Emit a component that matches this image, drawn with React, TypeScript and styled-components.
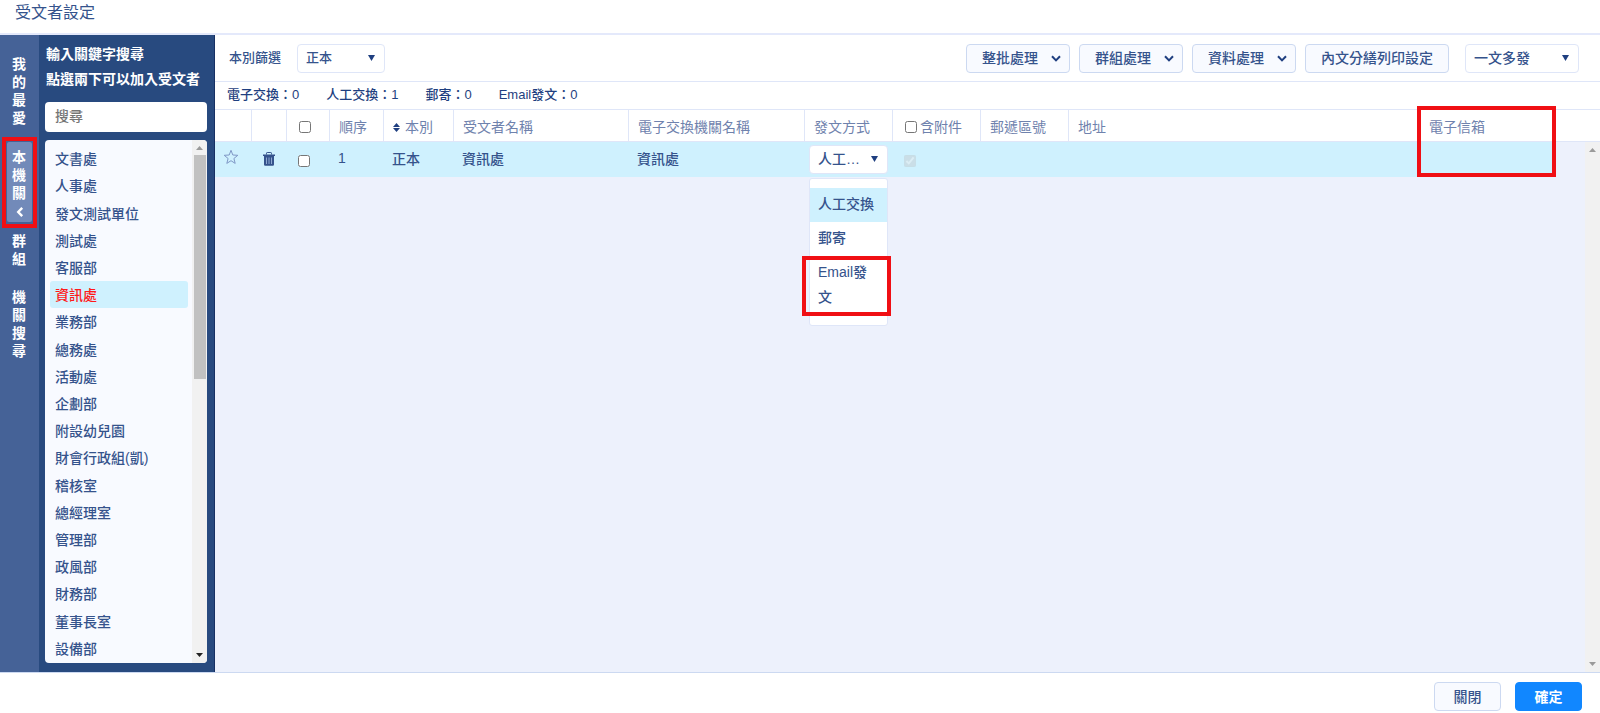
import React from "react";
import styled, { createGlobalStyle, css } from "styled-components";

const color = {
  ink: "#35538c",
  inkDeep: "#1f3f80",
  inkSoft: "#6f82ad",
  line: "#dfe6f8",
  lineStrong: "#ccd9f1",
  surface: "#edf1fc",
  panel: "#f8faff",
  highlight: "#cff1fe",
  navy: "#284a7f",
  rail: "#456297",
  railActive: "#728ab9",
  primary: "#1187ff",
  alert: "#f00f14",
};

const GlobalStyle = createGlobalStyle`
  *, *::before, *::after { box-sizing: border-box; }
  body {
    margin: 0;
    background: #fff;
    color: ${color.ink};
    font-family: "Liberation Sans", "Noto Sans CJK TC", sans-serif;
    font-size: 14px;
    font-weight: 500;
  }
  button, input, select { font: inherit; color: inherit; margin: 0; }
`;

const Page = styled.div`
  min-height: 100vh;
  display: flex;
  flex-direction: column;
`;

const TitleBar = styled.header`
  height: 35px;
  flex: none;
  padding: 0 15px;
  border-bottom: 2px solid #e4e9fb;
`;

const Title = styled.h1`
  margin: 0;
  font-size: 16px;
  font-weight: 400;
  line-height: 25px;
`;

const Body = styled.div`
  flex: 1;
  display: flex;
`;

/* Vertical tab rail */

const Rail = styled.nav`
  width: 39px;
  flex: none;
  display: flex;
  flex-direction: column;
  align-items: center;
  gap: 6px;
  padding: 14px 0;
  background: ${color.rail};
`;

const RailTab = styled.button<{ $active?: boolean }>`
  position: relative;
  width: 25px;
  padding: 6px 5px 8px;
  border: 0;
  border-radius: 2px;
  background: ${(p) => (p.$active ? color.railActive : "transparent")};
  color: #fff;
  font-weight: 700;
  line-height: 18px;
  text-align: left;
  word-break: break-all;
  ${(p) =>
    p.$active &&
    css`
      margin: 1px 0 -2px;
      padding-bottom: 2px;
    `}

  svg {
    display: block;
    margin: 4px auto 2px;
  }
`;

/* Search panel */

const SearchPanel = styled.aside`
  width: 176px;
  flex: none;
  display: flex;
  flex-direction: column;
  padding: 7px 7px 9px 6px;
  background: ${color.navy};
  border-right: 1px solid #173063;
`;

const Hint = styled.label`
  padding-left: 1px;
  color: #fff;
  font-weight: 700;
  line-height: 25px;
  white-space: nowrap;
`;

const SearchInput = styled.input`
  height: 30px;
  margin: 10px 0 8px;
  padding: 0 10px 2px;
  width: 100%;
  border: 0;
  border-radius: 4px;
  background: #fff;

  &::placeholder {
    color: #757575;
    opacity: 1;
  }
`;

const UnitBox = styled.div`
  flex: 1;
  display: flex;
  border-radius: 4px;
  overflow: hidden;
  background: ${color.panel};
`;

const UnitList = styled.ul`
  flex: 1;
  display: grid;
  grid-auto-rows: minmax(27px, 1fr);
  margin: 0;
  padding: 5px 4px 1px 5px;
  list-style: none;
`;

const Unit = styled.button<{ $selected?: boolean }>`
  width: 100%;
  height: 100%;
  padding: 0 5px 1px;
  border: 0;
  border-radius: 3px;
  text-align: left;
  background: ${(p) => (p.$selected ? color.highlight : "transparent")};
  color: ${(p) => (p.$selected ? "#ff1a1a" : color.ink)};
`;

/* Scroll track with arrows and an optional thumb */

const Track = styled.div`
  width: 15px;
  flex: none;
  display: flex;
  flex-direction: column;
  align-items: center;
  padding: 6px 0;
  background: #f1f1f1;
`;

const Thumb = styled.div`
  width: 12px;
  height: 224px;
  margin-top: 5px;
  background: #c1c1c1;
`;

const TrackEnd = styled.div`
  flex: 1;
  display: flex;
  align-items: flex-end;
`;

const ArrowIcon = styled.svg`
  display: block;
`;

const Arrow = ({ down, fill = "#9a9a9a" }: { down?: boolean; fill?: string }) => (
  <ArrowIcon width="7" height="4" viewBox="0 0 7 4" aria-hidden="true">
    <path d={down ? "M0 0h7L3.5 4z" : "M0 4h7L3.5 0z"} fill={fill} />
  </ArrowIcon>
);

/* Main area */

const Main = styled.main`
  flex: 1;
  min-width: 0;
  display: flex;
  flex-direction: column;
  background: ${color.surface};
`;

const Toolbar = styled.div`
  height: 47px;
  flex: none;
  display: flex;
  align-items: center;
  gap: 9px;
  padding: 0 21px 0 14px;
  background: #fff;
  border-bottom: 1px solid ${color.line};
`;

const Filter = styled.div`
  display: flex;
  align-items: center;
  gap: 16px;
  margin-right: auto;
  font-size: 13px;
  white-space: nowrap;
`;

const FilterLabel = styled.label`
  padding-bottom: 3px;
`;

const SelectWrap = styled.span<{ $width: number; $size?: number }>`
  position: relative;
  display: block;
  width: ${(p) => p.$width}px;
  height: 29px;
  font-size: ${(p) => p.$size ?? 14}px;

  > svg {
    position: absolute;
    right: 10px;
    top: 11px;
    pointer-events: none;
  }
`;

const Select = styled.select`
  appearance: none;
  display: block;
  width: 100%;
  height: 100%;
  padding: 0 24px 1px 8px;
  border: 1px solid ${color.line};
  border-radius: 4px;
  background: #fff;
  text-overflow: ellipsis;
`;

const DispatchSelect = styled(SelectWrap)`
  margin-left: 7px;
`;

const DeliverySelect = styled(SelectWrap)`
  margin-left: -4px;
`;

const Caret = () => (
  <svg width="7" height="6" viewBox="0 0 7 6" aria-hidden="true">
    <path d="M0 0h7L3.5 6z" fill={color.inkDeep} />
  </svg>
);

const Button = styled.button<{ $primary?: boolean; $width?: number }>`
  display: inline-flex;
  align-items: center;
  justify-content: center;
  gap: 13px;
  height: 29px;
  padding: 0 8px 2px 15px;
  border: 1px solid ${color.lineStrong};
  border-radius: 4px;
  background: ${color.panel};
  white-space: nowrap;
  ${(p) =>
    p.$width &&
    css`
      width: ${p.$width}px;
      padding: 0 0 2px;
    `}
  ${(p) =>
    p.$primary &&
    css`
      border-color: ${color.primary};
      background: ${color.primary};
      color: #fff;
      font-weight: 700;
    `}
`;

const ChevronIcon = styled.svg`
  margin-top: 2px;
`;

const Chevron = () => (
  <ChevronIcon width="10" height="7" viewBox="0 0 10 7" fill="none" aria-hidden="true">
    <path d="M1 1.2 5 5.4 9 1.2" stroke={color.inkDeep} strokeWidth="2" />
  </ChevronIcon>
);

const Totals = styled.div`
  height: 28px;
  flex: none;
  display: flex;
  align-items: center;
  gap: 27px;
  padding: 0 12px 4px;
  background: #fff;
  border-bottom: 1px solid ${color.line};
  color: ${color.inkDeep};
  font-size: 13px;
`;

const TableArea = styled.div`
  position: relative;
  flex: 1;
`;

const TableTrack = styled(Track)`
  position: absolute;
  top: 32px;
  right: 0;
  bottom: 0;
`;

const Table = styled.table`
  width: 100%;
  table-layout: fixed;
  border-collapse: separate;
  border-spacing: 0;
`;

const Th = styled.th<{ $divider?: boolean }>`
  position: relative;
  height: 32px;
  padding: 0 0 0 9px;
  background: #fff;
  border-bottom: 1px solid ${color.line};
  border-right: ${(p) => (p.$divider === false ? "0" : `1px solid ${color.line}`)};
  color: ${color.inkSoft};
  font-weight: 400;
  text-align: left;
  white-space: nowrap;
`;

const Td = styled.td<{ $text?: boolean }>`
  position: relative;
  height: 35px;
  padding: ${(p) => (p.$text ? "0 0 3px 8px" : "0 0 0 8px")};
  background: ${color.highlight};
`;

const BlankTd = styled.td``;

const Inline = styled.span`
  display: flex;
  align-items: center;
  gap: 5px;

  svg {
    margin-top: 3px;
  }
`;

const CheckLabel = styled.label`
  display: flex;
  align-items: center;
  gap: 3px;
  padding-left: 3px;
`;

const Check = styled.input.attrs({ type: "checkbox" })<{ $indent?: number }>`
  display: block;
  width: 12px;
  height: 12px;
  margin: 2px 0 0 ${(p) => p.$indent ?? 0}px;

  &:disabled {
    opacity: 0.5;
  }
`;

const IconButton = styled.button<{ $indent?: number }>`
  display: block;
  padding: 0 0 1px;
  border: 0;
  margin-left: ${(p) => p.$indent ?? 0}px;
  background: none;

  svg {
    display: block;
  }
`;

const StarButton = styled(IconButton)`
  padding-bottom: 5px;
`;

/* Open drop-down list under the delivery select */

const Menu = styled.ul`
  position: absolute;
  top: 36px;
  left: 4px;
  width: 79px;
  margin: 0;
  padding: 9px 0 10px;
  border: 1px solid ${color.line};
  border-radius: 3px;
  background: #fff;
  list-style: none;
`;

const MenuItem = styled.li<{ $selected?: boolean }>`
  position: relative;
  padding: 4px 8px 5px;
  line-height: 25px;
  background: ${(p) => (p.$selected ? color.highlight : "transparent")};
`;

const Outline = styled.span<{ $inset: string }>`
  position: absolute;
  inset: ${(p) => p.$inset};
  z-index: 1;
  border: 4px solid ${color.alert};
  pointer-events: none;
`;

const Footer = styled.footer`
  height: 41px;
  flex: none;
  display: flex;
  justify-content: flex-end;
  gap: 14px;
  padding: 9px 18px 0;
  border-top: 1px solid ${color.lineStrong};
`;

const units = [
  "文書處", "人事處", "發文測試單位", "測試處", "客服部", "資訊處", "業務部",
  "總務處", "活動處", "企劃部", "附設幼兒園", "財會行政組(凱)", "稽核室",
  "總經理室", "管理部", "政風部", "財務部", "董事長室", "設備部",
];

const totals = ["電子交換：0", "人工交換：1", "郵寄：0", "Email發文：0"];

const columnWidths = [37, 35, 43, 54, 70, 175, 176, 88, 88, 88, undefined, 132, 48];

export default function App() {
  return (
    <Page>
      <GlobalStyle />
      <TitleBar>
        <Title>受文者設定</Title>
      </TitleBar>

      <Body>
        <Rail>
          <RailTab>我的最愛</RailTab>
          <RailTab $active>
            本機關
            <svg width="8" height="12" viewBox="0 0 8 12" fill="none" aria-hidden="true">
              <path d="M6.2 1.8 2.2 6l4 4.2" stroke="#fff" strokeWidth="2.4" />
            </svg>
            <Outline $inset="-5px -5px -6px" />
          </RailTab>
          <RailTab>群組</RailTab>
          <RailTab>機關搜尋</RailTab>
        </Rail>

        <SearchPanel>
          <Hint htmlFor="unit-search">
            輸入關鍵字搜尋
            <br />
            點選兩下可以加入受文者
          </Hint>
          <SearchInput id="unit-search" type="text" placeholder="搜尋" />
          <UnitBox>
            <UnitList>
              {units.map((name) => (
                <li key={name}>
                  <Unit $selected={name === "資訊處"}>{name}</Unit>
                </li>
              ))}
            </UnitList>
            <Track>
              <Arrow />
              <Thumb />
              <TrackEnd>
                <Arrow down fill="#222" />
              </TrackEnd>
            </Track>
          </UnitBox>
        </SearchPanel>

        <Main>
          <Toolbar>
            <Filter>
              <FilterLabel htmlFor="copy-filter">本別篩選</FilterLabel>
              <SelectWrap $width={88} $size={13}>
                <Select id="copy-filter" defaultValue="正本">
                  <option>正本</option>
                </Select>
                <Caret />
              </SelectWrap>
            </Filter>
            {["整批處理", "群組處理", "資料處理"].map((text) => (
              <Button key={text}>
                {text}
                <Chevron />
              </Button>
            ))}
            <Button $width={144}>內文分繕列印設定</Button>
            <DispatchSelect $width={114}>
              <Select aria-label="發文模式" defaultValue="一文多發">
                <option>一文多發</option>
              </Select>
              <Caret />
            </DispatchSelect>
          </Toolbar>

          <Totals>
            {totals.map((text) => (
              <span key={text}>{text}</span>
            ))}
          </Totals>

          <TableArea>
            <Table>
              <colgroup>
                {columnWidths.map((width, i) => (
                  <col key={i} width={width} />
                ))}
              </colgroup>
              <thead>
                <tr>
                  <Th />
                  <Th />
                  <Th>
                    <Check $indent={3} aria-label="全選" />
                  </Th>
                  <Th>順序</Th>
                  <Th>
                    <Inline>
                      <svg width="7" height="9" viewBox="0 0 7 9" aria-hidden="true">
                        <path d="M0 3.9h7L3.5 0zM0 5.1h7L3.5 9z" fill={color.inkDeep} />
                      </svg>
                      本別
                    </Inline>
                  </Th>
                  <Th>受文者名稱</Th>
                  <Th>電子交換機關名稱</Th>
                  <Th>發文方式</Th>
                  <Th>
                    <CheckLabel>
                      <Check />
                      含附件
                    </CheckLabel>
                  </Th>
                  <Th>郵遞區號</Th>
                  <Th>地址</Th>
                  <Th $divider={false}>
                    電子信箱
                    <Outline $inset="-4px -4px -36px -3px" />
                  </Th>
                  <Th $divider={false} />
                </tr>
              </thead>
              <tbody>
                <tr>
                  <Td>
                    <StarButton aria-label="加入最愛">
                      <svg width="16" height="16" viewBox="0 0 16 16" fill="none">
                        <path
                          d="M8 1.3l1.8 4.7 5 .3-3.9 3.2 1.3 4.9L8 11.7l-4.2 2.7 1.3-4.9L1.2 6.3l5-.3z"
                          stroke="#7f98c6"
                          strokeWidth="1"
                        />
                      </svg>
                    </StarButton>
                  </Td>
                  <Td>
                    <IconButton $indent={3} aria-label="刪除">
                      <svg width="12" height="14" viewBox="0 0 12 14">
                        <path
                          d="M3.5 2.5V1.2Q3.5.5 4.2.5h3.6q.7 0 .7.7v1.3"
                          fill="none"
                          stroke={color.ink}
                        />
                        <path d="M0 2.5h12V4H0zM1 4h10v8.6q0 1.2-1.2 1.2H2.2Q1 13.8 1 12.6z" fill={color.ink} />
                        <path d="M3.5 5.5v6.5M6 5.5v6.5M8.5 5.5v6.5" stroke="#8fa9d2" />
                      </svg>
                    </IconButton>
                  </Td>
                  <Td>
                    <Check $indent={3} aria-label="選取 資訊處" />
                  </Td>
                  <Td $text>1</Td>
                  <Td $text>正本</Td>
                  <Td $text>資訊處</Td>
                  <Td $text>資訊處</Td>
                  <Td>
                    <DeliverySelect $width={79}>
                      <Select aria-label="發文方式" defaultValue="人工交換">
                        <option>人工交換</option>
                        <option>郵寄</option>
                        <option>Email發文</option>
                      </Select>
                      <Caret />
                    </DeliverySelect>
                    <Menu role="listbox" aria-label="發文方式">
                      <MenuItem role="option" aria-selected $selected>
                        人工交換
                      </MenuItem>
                      <MenuItem role="option">郵寄</MenuItem>
                      <MenuItem role="option">
                        Email發文
                        <Outline $inset="0 -4px -1px -8px" />
                      </MenuItem>
                    </Menu>
                  </Td>
                  <Td>
                    <Check $indent={3} checked disabled readOnly aria-label="含附件" />
                  </Td>
                  <Td />
                  <Td />
                  <Td />
                  <BlankTd />
                </tr>
              </tbody>
            </Table>
            <TableTrack>
              <Arrow />
              <TrackEnd>
                <Arrow down />
              </TrackEnd>
            </TableTrack>
          </TableArea>
        </Main>
      </Body>

      <Footer>
        <Button $width={67}>關閉</Button>
        <Button $width={67} $primary>
          確定
        </Button>
      </Footer>
    </Page>
  );
}
